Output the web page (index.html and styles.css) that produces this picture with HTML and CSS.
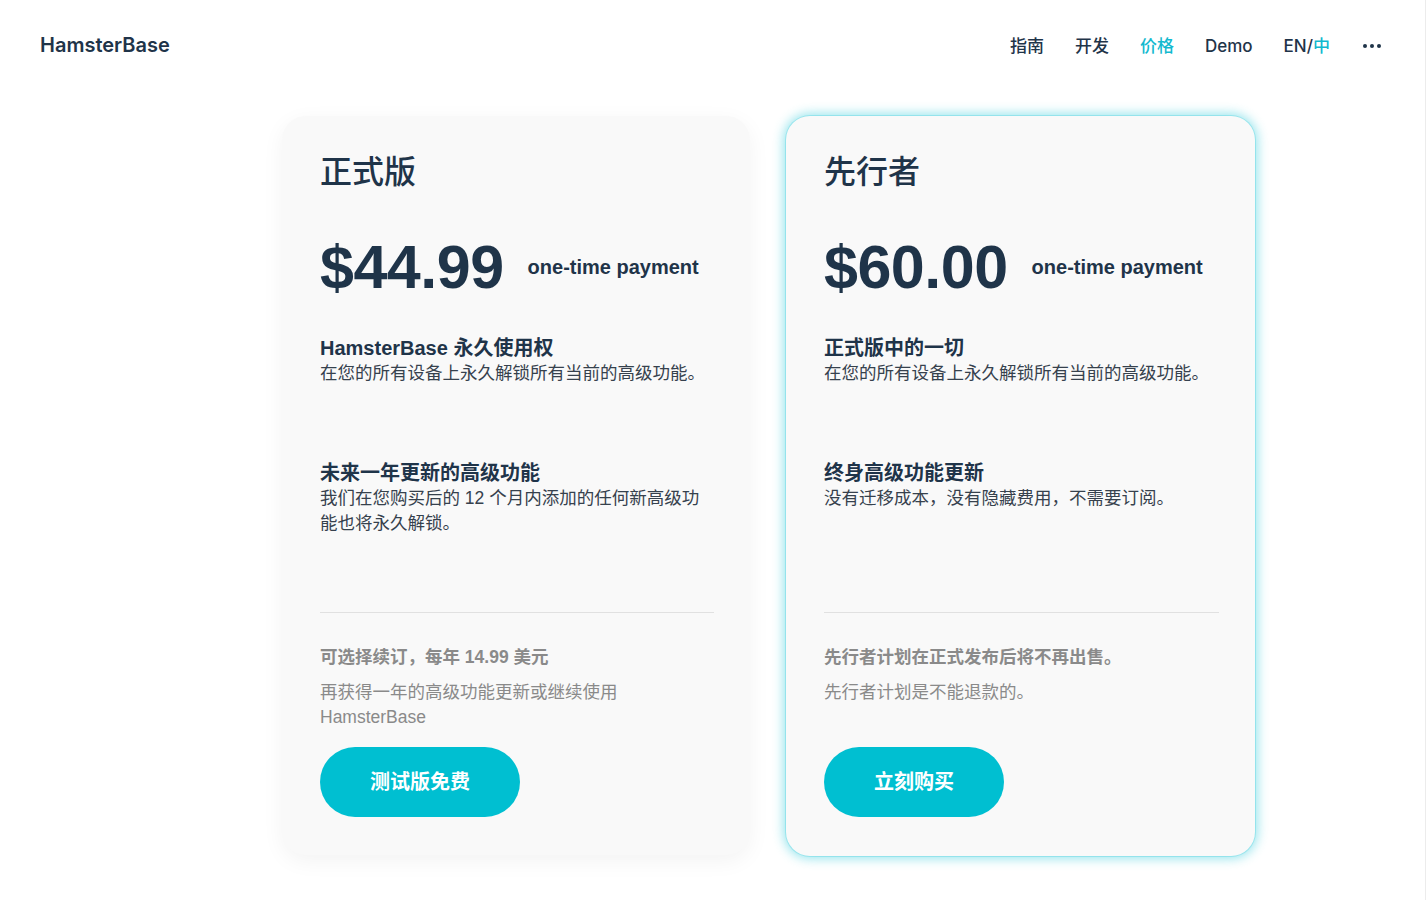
FILE: index.html
```html
<!DOCTYPE html>
<html lang="zh">
<head>
<meta charset="utf-8">
<title>HamsterBase - 价格</title>
<link rel="stylesheet" href="styles.css">
</head>
<body>
<div class="page">

<div class="top_bar">
	<a class="logo" href="#">HamsterBase</a>
	<div class="nav">
		<a class="nav_item" href="#">指南</a>
		<a class="nav_item" href="#">开发</a>
		<a class="nav_item active" href="#">价格</a>
		<a class="nav_item" href="#">Demo</a>
		<a class="nav_item" href="#">EN/<span class="lang_on">中</span></a>
		<a class="nav_more" href="#"><span></span><span></span><span></span></a>
	</div>
</div>

<div class="plans">

	<div class="plan">
		<h2 class="plan_name">正式版</h2>
		<div class="price_row">
			<span class="price">$44.99</span>
			<span class="price_note">one-time payment</span>
		</div>
		<div class="feature">
			<h3>HamsterBase 永久使用权</h3>
			<p>在您的所有设备上永久解锁所有当前的高级功能。</p>
		</div>
		<div class="feature">
			<h3>未来一年更新的高级功能</h3>
			<p>我们在您购买后的 12 个月内添加的任何新高级功能也将永久解锁。</p>
		</div>
		<hr class="divider">
		<div class="notes">
			<p class="note_title">可选择续订，每年 14.99 美元</p>
			<p class="note_text">再获得一年的高级功能更新或继续使用 HamsterBase</p>
		</div>
		<a class="buy_button" href="#">测试版免费</a>
	</div>

	<div class="plan featured">
		<h2 class="plan_name">先行者</h2>
		<div class="price_row">
			<span class="price">$60.00</span>
			<span class="price_note">one-time payment</span>
		</div>
		<div class="feature">
			<h3>正式版中的一切</h3>
			<p>在您的所有设备上永久解锁所有当前的高级功能。</p>
		</div>
		<div class="feature">
			<h3>终身高级功能更新</h3>
			<p>没有迁移成本，没有隐藏费用，不需要订阅。</p>
		</div>
		<hr class="divider">
		<div class="notes">
			<p class="note_title">先行者计划在正式发布后将不再出售。</p>
			<p class="note_text">先行者计划是不能退款的。</p>
		</div>
		<a class="buy_button" href="#">立刻购买</a>
	</div>

</div>

</div>
</body>
</html>
```

FILE: styles.css
```css
html {
	background-color:#ffffff;
}
body {
	margin:0;
	font-family:"Liberation Sans", "Noto Sans CJK SC", sans-serif;
	color:#1f3449;
}
a {
	text-decoration:none;
	color:inherit;
}
.page {
	width:1426px;
	min-height:100vh;
	border-right:1px solid #ececec;
	box-sizing:border-box;
}
.top_bar {
	display:flex;
	align-items:center;
	justify-content:space-between;
	height:90px;
	padding:0 44px 0 40px;
	font-family:Inter, "Noto Sans CJK SC", sans-serif;
}
.logo {
	font-size:20px;
	font-weight:600;
	color:#1f3449;
}
.nav {
	display:flex;
	align-items:center;
	gap:31px;
	padding-top:2px;
}
.nav_item {
	font-size:17px;
	line-height:24px;
	font-weight:500;
	color:#1f3449;
}
.nav_item.active, .lang_on {
	color:#12b9cf;
}
.nav_more {
	display:flex;
	gap:3px;
	margin-left:2px;
	padding:4px 0;
}
.nav_more span {
	width:4px;
	height:4px;
	border-radius:50%;
	background-color:#1f3449;
}
.plans {
	display:flex;
	align-items:flex-start;
	gap:36px;
	padding:26px 0 40px 282px;
}
.plan {
	width:468px;
	box-sizing:border-box;
	padding:37px 36px 38px 38px;
	background-color:#f9f9f9;
	border-radius:24px;
	box-shadow:0 6px 22px rgba(0,0,0,0.05);
}
.plan.featured {
	width:469px;
	padding-bottom:39px;
	box-shadow:0 0 0 1px rgba(0,190,210,0.2), 0 0 12px 2px rgba(0,190,210,0.45);
}
.plan_name {
	margin:0;
	font-size:32px;
	line-height:38px;
	font-weight:500;
	color:#1f3449;
}
.price_row {
	display:flex;
	align-items:center;
	gap:24px;
	margin-top:46px;
	height:60px;
}
.price {
	font-size:61px;
	line-height:60px;
	font-weight:bold;
	letter-spacing:-0.5px;
	color:#1f3449;
}
.price_note {
	font-size:20px;
	font-weight:bold;
	color:#1f3449;
}
.feature {
	height:125px;
}
.price_row + .feature {
	margin-top:38px;
}
.feature h3 {
	margin:0;
	font-size:20px;
	line-height:26px;
	font-weight:bold;
	color:#1f3449;
}
.feature p {
	margin:0;
	font-size:17.5px;
	line-height:25px;
	color:#36414d;
}
.divider {
	margin:27px 0 0 0;
	border:none;
	border-top:1px solid #e1e1e1;
}
.notes {
	margin-top:32px;
	min-height:85px;
}
.notes p {
	margin:0;
	font-size:17.5px;
	line-height:25px;
	color:#8a8a8a;
}
.note_title {
	font-weight:bold;
	color:#808080;
}
.notes .note_text {
	margin-top:10px;
}
.buy_button {
	display:inline-block;
	margin-top:17px;
	height:70px;
	line-height:70px;
	padding:0 50px;
	border-radius:35px;
	background-color:#00bfd1;
	color:#ffffff;
	font-size:20px;
	font-weight:bold;
}
```
